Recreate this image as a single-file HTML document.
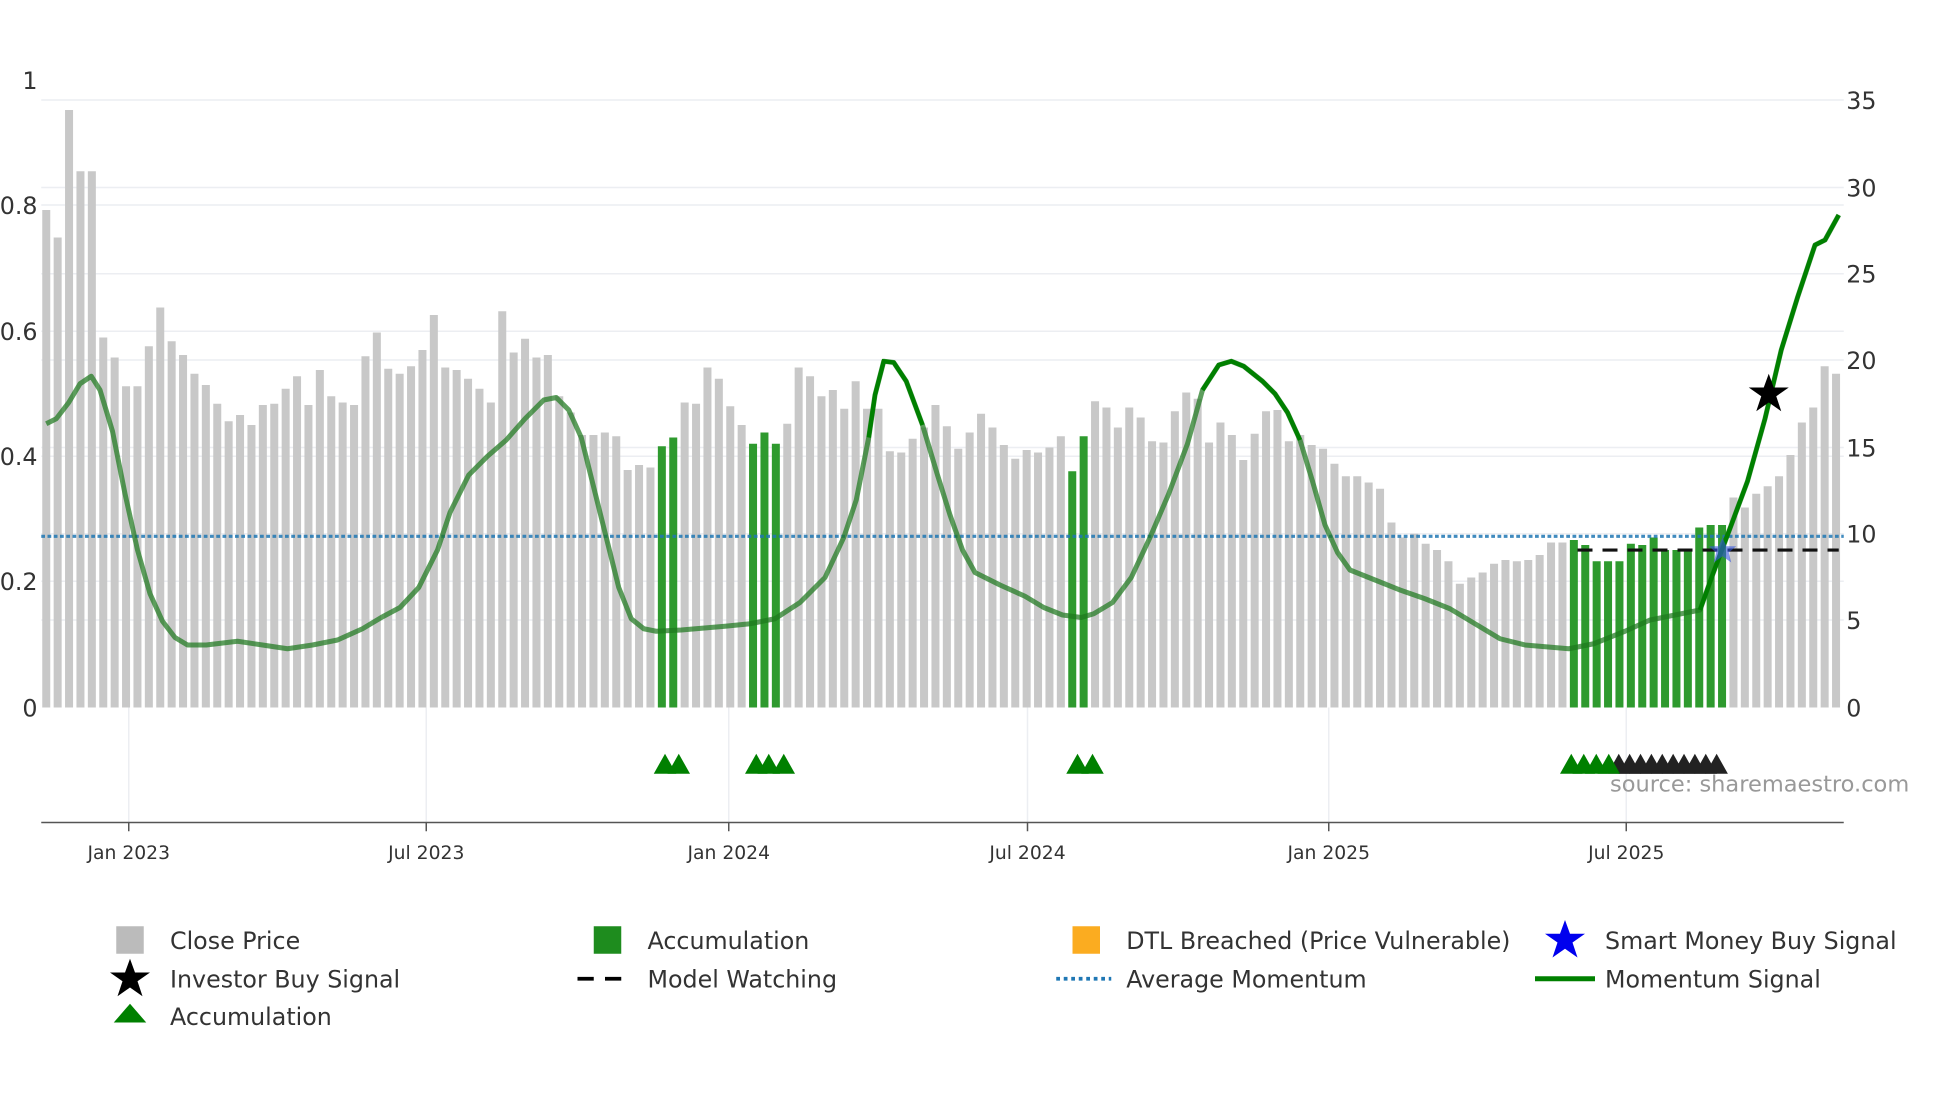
<!DOCTYPE html>
<html><head><meta charset="utf-8"><style>
html,body{margin:0;padding:0;background:#fff;}
svg{display:block;font-family:"DejaVu Sans","Liberation Sans",sans-serif;}
</style></head><body>
<svg id="c" width="1960" height="1102" viewBox="0 0 1568 881.6" preserveAspectRatio="none" xmlns="http://www.w3.org/2000/svg">
<g stroke="#eceef2" stroke-width="1.2">
<line x1="33" x2="1475" y1="164" y2="164"/><line x1="33" x2="1475" y1="265" y2="265"/><line x1="33" x2="1475" y1="365" y2="365"/><line x1="33" x2="1475" y1="465" y2="465"/>
<line x1="33" x2="1475" y1="80" y2="80"/><line x1="33" x2="1475" y1="150" y2="150"/><line x1="33" x2="1475" y1="219" y2="219"/><line x1="33" x2="1475" y1="288" y2="288"/><line x1="33" x2="1475" y1="358" y2="358"/><line x1="33" x2="1475" y1="427" y2="427"/><line x1="33" x2="1475" y1="496" y2="496"/>
<line x1="103" x2="103" y1="566" y2="658"/><line x1="341" x2="341" y1="566" y2="658"/><line x1="583" x2="583" y1="566" y2="658"/><line x1="822" x2="822" y1="566" y2="658"/><line x1="1063" x2="1063" y1="566" y2="658"/><line x1="1301" x2="1301" y1="566" y2="658"/>
</g>
<g id="bars"></g>
<line x1="33" x2="1475" y1="429" y2="429" stroke="#1f77b4" stroke-width="2.5" stroke-dasharray="3,2" opacity="0.85"/>
<line x1="1262" x2="1471" y1="440" y2="440" stroke="#111" stroke-width="2.5" stroke-dasharray="12,8"/>
<polyline id="mom" fill="none" stroke="rgba(30,120,30,0.72)" stroke-width="4" stroke-linejoin="round"/>
<polyline id="m1" fill="none" stroke="#008000" stroke-width="3.5"/>
<polyline id="m2" fill="none" stroke="#008000" stroke-width="3.5"/>
<polyline id="m3" fill="none" stroke="#008000" stroke-width="3.5"/>
<g id="tri"></g>
<path d="M1415,299 L1419,310 L1431,310 L1421,317 L1425,329 L1415,322 L1405,329 L1409,317 L1399,310 L1411,310Z" fill="#000"/>
<path d="M1378,430 L1381,437 L1389,437 L1383,442 L1385,450 L1378,445 L1371,450 L1373,442 L1367,437 L1375,437Z" fill="#3355dd" opacity="0.6"/>
<line x1="33" x2="1475" y1="658" y2="658" stroke="#555" stroke-width="1.2"/>
<g stroke="#555" stroke-width="1.2"><line x1="103" x2="103" y1="658" y2="665"/><line x1="341" x2="341" y1="658" y2="665"/><line x1="583" x2="583" y1="658" y2="665"/><line x1="822" x2="822" y1="658" y2="665"/><line x1="1063" x2="1063" y1="658" y2="665"/><line x1="1301" x2="1301" y1="658" y2="665"/></g>
<g font-size="15" fill="#333" text-anchor="middle"><text x="103" y="687">Jan 2023</text><text x="341" y="687">Jul 2023</text><text x="583" y="687">Jan 2024</text><text x="822" y="687">Jul 2024</text><text x="1063" y="687">Jan 2025</text><text x="1301" y="687">Jul 2025</text></g>
<g font-size="19" fill="#333" text-anchor="end"><text x="30" y="71">1</text><text x="30" y="171">0.8</text><text x="30" y="272">0.6</text><text x="30" y="372">0.4</text><text x="30" y="472">0.2</text><text x="30" y="573">0</text></g>
<g font-size="19" fill="#333"><text x="1477" y="87">35</text><text x="1477" y="157">30</text><text x="1477" y="226">25</text><text x="1477" y="295">20</text><text x="1477" y="365">15</text><text x="1477" y="434">10</text><text x="1477" y="503">5</text><text x="1477" y="573">0</text></g>
<text x="1288" y="633" font-size="18" fill="#999">source: sharemaestro.com</text>
<g font-size="19" fill="#333">
<rect x="93" y="741" width="22" height="22" fill="#bbb"/><text x="136" y="759">Close Price</text>
<rect x="475" y="741" width="22" height="22" fill="#1e8c1e"/><text x="518" y="759">Accumulation</text>
<rect x="858" y="741" width="22" height="22" fill="#fbac20"/><text x="901" y="759">DTL Breached (Price Vulnerable)</text>
<path d="M1252,736 L1256,747 L1268,747 L1258,754 L1262,766 L1252,759 L1242,766 L1246,754 L1236,747 L1248,747Z" fill="#0000ee"/><text x="1284" y="759">Smart Money Buy Signal</text>
<path d="M104,767 L108,778 L120,778 L110,785 L114,797 L104,790 L94,797 L98,785 L88,778 L100,778Z" fill="#000"/><text x="136" y="790">Investor Buy Signal</text>
<line x1="462" x2="506" y1="783" y2="783" stroke="#000" stroke-width="3" stroke-dasharray="13,9"/><text x="518" y="790">Model Watching</text>
<line x1="845" x2="889" y1="783" y2="783" stroke="#1f77b4" stroke-width="3" stroke-dasharray="3,3"/><text x="901" y="790">Average Momentum</text>
<line x1="1228" x2="1276" y1="783" y2="783" stroke="#008000" stroke-width="4"/><text x="1284" y="790">Momentum Signal</text>
<path d="M104,803 L117,818 L91,818Z" fill="#008000"/><text x="136" y="820">Accumulation</text>
</g>
</svg>
<script>
var NS="http://www.w3.org/2000/svg";
var tops=[168,190,88,137,137,270,286,309,309,277,246,273,284,299,308,323,337,332,340,324,323,311,301,324,296,317,322,324,285,266,295,299,293,280,252,294,296,303,311,322,249,282,271,286,284,317,330,348,348,346,349,376,372,374,357,350,322,323,294,303,325,340,355,346,355,339,294,301,317,312,327,305,327,327,361,362,351,342,324,341,359,346,331,342,356,367,360,362,358,349,377,349,321,326,342,326,334,353,354,329,314,319,354,338,348,368,347,329,328,353,348,356,359,371,381,381,386,391,418,430,427,435,440,449,467,462,458,451,448,449,448,444,434,434,
432,436,449,449,449,435,436,430,440,440,440,422,420,420,
398,406,395,389,381,364,338,326,293,299];
var green={54:1,55:1,62:1,63:1,64:1,90:1,91:1};
for(var i=134;i<=147;i++)green[i]=1;
var b=document.getElementById("bars");
for(var i=0;i<tops.length;i++){var r=document.createElementNS(NS,"rect");var x=37+i*9.12;r.setAttribute("x",x-3.2);r.setAttribute("width",6.4);r.setAttribute("y",tops[i]);r.setAttribute("height",566-tops[i]);r.setAttribute("fill",green[i]?"#2e9a2e":"#c8c8c8");b.appendChild(r);}
var pts=[[37,339],[45,335],[55,322],[64,307],[73,301],[80,312],[90,345],[100,395],[110,440],[120,475],[130,497],[140,510],[150,516],[165,516],[190,513],[210,516],[230,519],[250,516],[270,512],[290,503],[305,494],[320,486],[335,470],[350,440],[360,410],[375,380],[390,365],[405,352],[420,335],[435,320],[445,318],[455,328],[465,350],[475,390],[485,430],[495,470],[505,495],[515,503],[525,505],[545,504],[580,501],[600,499],[620,495],[640,482],[660,462],[675,430],[685,400],[695,350],[700,316],[707,289],[715,290],[725,305],[738,340],[750,380],[760,412],[770,440],[780,458],[800,468],[820,477],[835,486],[850,492],[865,494],[875,491],[890,482],[905,462],[920,430],[935,395],[950,355],[962,312],[975,292],[985,289],[995,293],[1010,305],[1020,315],[1030,330],[1040,352],[1050,385],[1060,420],[1070,442],[1080,456],[1100,464],[1120,472],[1140,479],[1160,487],[1180,499],[1200,511],[1220,516],[1255,519],[1275,515],[1300,505],[1320,496],[1340,492],[1360,488],[1370,460],[1385,420],[1398,385],[1412,335],[1425,280],[1438,238],[1452,196],[1460,192],[1471,172]];
function seg(a,z){return pts.filter(function(p){return p[0]>=a&&p[0]<=z}).map(function(p){return p.join(",")}).join(" ");}
document.getElementById("mom").setAttribute("points",seg(0,2000));
document.getElementById("m1").setAttribute("points",seg(695,740));
document.getElementById("m2").setAttribute("points",seg(960,1042));
document.getElementById("m3").setAttribute("points",seg(1360,2000));
var t=document.getElementById("tri");
function tri(x,c){var p=document.createElementNS(NS,"path");p.setAttribute("d","M"+x+",603 L"+(x+9)+",619 L"+(x-9)+",619Z");p.setAttribute("fill",c);t.appendChild(p);}
[532,543,605,615,627,862,874].forEach(function(x){tri(x,"#008000")});
for(var x=1295;x<=1382;x+=8.7)tri(x,"#222");
[1257,1267,1277,1287].forEach(function(x){tri(x,"#008000")});
</script>
</body></html>
